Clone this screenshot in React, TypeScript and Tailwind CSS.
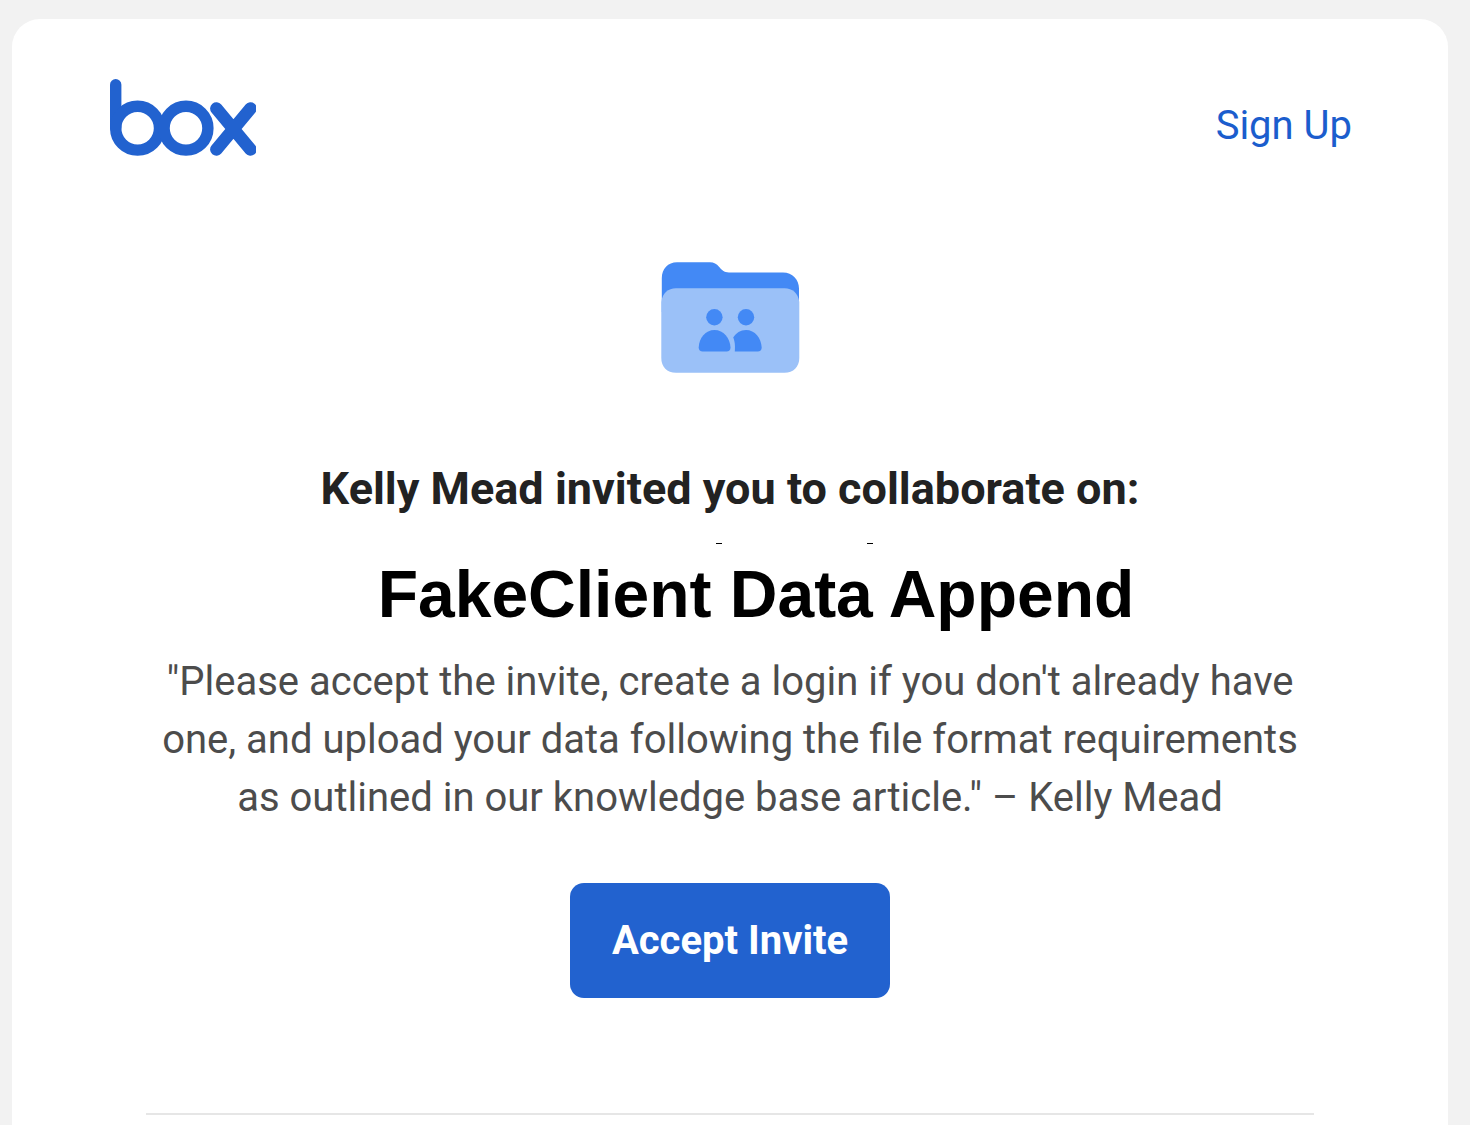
function BoxLogo() {
  return (
    <svg className="h-[77px] w-[146px]" viewBox="0 0 146 77" fill="none" stroke="#2262cf" strokeWidth="11.4" role="img" aria-label="Box">
      <path d="M5.7 5.7V49" strokeLinecap="round" />
      <circle cx="27.6" cy="49.2" r="21.9" />
      <circle cx="76" cy="49.2" r="21.9" />
      <path d="M106.400 29.500 140.500 70.500M140.500 29.500 106.400 70.500" strokeWidth="12.6" strokeLinecap="round" />
    </svg>
  );
}

function SharedFolder() {
  return (
    <svg className="h-[112px] w-[140px]" viewBox="0 0 140 112" fill="#4389f5" role="img" aria-label="Shared folder">
      <path d="M1.800 50V16C1.800 7 8 .3 17 .3H50c4 0 6.500 1.700 9 4.500C61.500 7.800 64 10.500 69 10.500H123c9.500 0 16 7 16 16V50Z" />
      <path d="M1.300 40C2.500 31 8 26.300 16 26.300H124.500c8 0 13.500 4.700 14.800 13.700V96c0 9-6 14.700-14.800 14.700H16C7 110.700 1.300 105 1.300 96Z" fill="#9bc1f8" />
      <circle cx="54.400" cy="55.200" r="8.200" />
      <circle cx="86" cy="55.200" r="8.200" />
      <path d="M54.500 68C45.500 68 39 76 38.700 85.500c0 2.700 1.500 4 4 4H66.500c2.500 0 4-1.300 4-4C70 76 63.500 68 54.500 68Z" />
      <path d="M86 68c-5.500 0-10 3-12.800 7.600 1.500 3.600 2.100 7 1.600 13.900H97.700c2.500 0 4-1.300 4-4C101.200 76 95 68 86 68Z" />
    </svg>
  );
}

export default function App() {
  return (
    <div className="min-h-screen bg-[#f2f2f2] pt-[19px] pr-[22px] pl-3 font-['Roboto',sans-serif]">
      <main className="flex min-h-[1106px] flex-col rounded-t-[28px] bg-white pt-[60px]">
        <header className="flex items-start justify-between pr-24 pl-[98px]">
          <BoxLogo />
          <a href="#signup" className="mt-[21px] text-[40px] leading-[52px] text-[#1b5dcd]">Sign Up</a>
        </header>

        <section className="flex flex-col items-center px-[134px] pt-[106px] text-center">
          <SharedFolder />
          <p className="mt-[86px] text-[45px] leading-[58px] font-bold text-[#222]">
            Kelly Mead invited you to collaborate on:
          </p>

          <div className="mt-[25px] flex gap-[145px] pl-[128px]" aria-hidden="true">
            <span className="h-px w-1.5 bg-black" />
            <span className="h-px w-1.5 bg-black" />
          </div>
          <h1 className="mt-3 pl-[52px] font-['Liberation_Sans',Arial,sans-serif] text-[66px] leading-[76px] font-bold text-black">
            FakeClient Data Append
          </h1>

          <p className="mt-[21px] text-[40px] leading-[58px] text-[#4c4c4c]">
            "Please accept the invite, create a login if you don't already have<br />
            one, and upload your data following the file format requirements<br />
            as outlined in our knowledge base article." – Kelly Mead
          </p>

          <button type="button" className="mt-[56px] rounded-[14px] bg-[#2262cf] px-[42px] py-[31px] text-[40px] leading-[53px] font-bold text-white">
            Accept Invite
          </button>
        </section>

        <hr className="mx-[134px] mt-[115px] border-t-2 border-[#e6e6e6]" />
      </main>
    </div>
  );
}
